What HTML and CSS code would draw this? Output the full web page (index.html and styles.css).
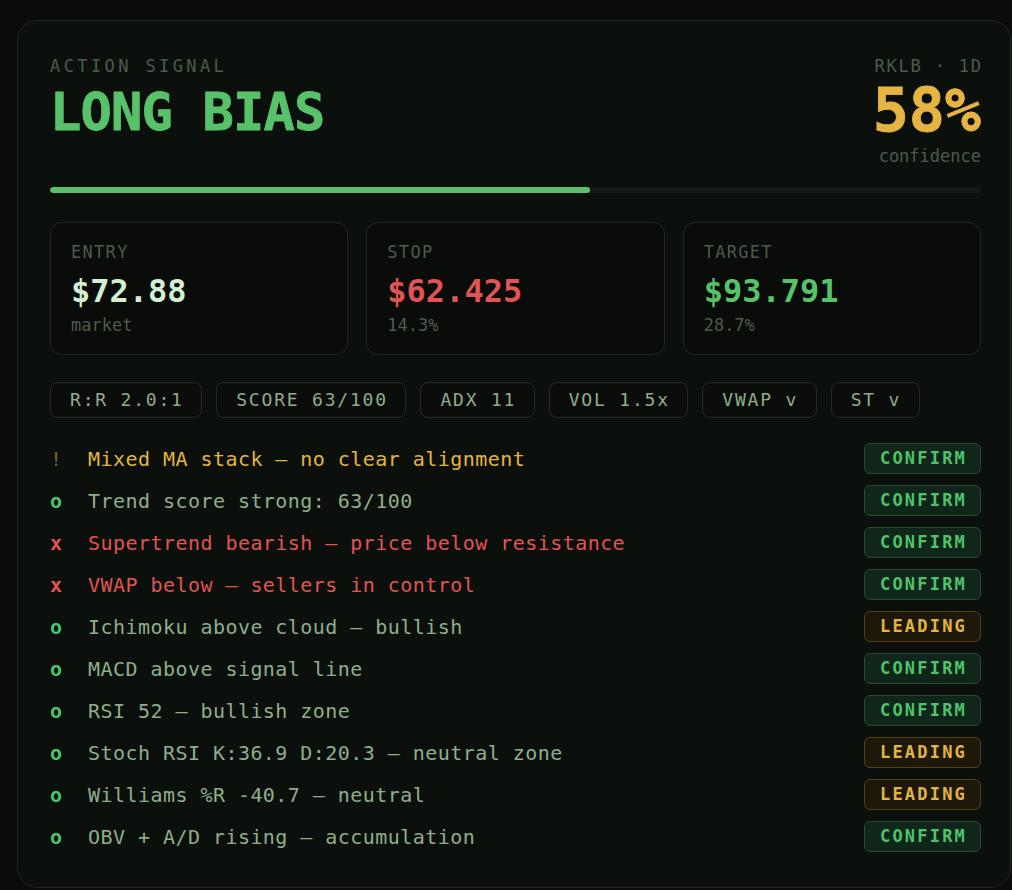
FILE: index.html
```html
<!DOCTYPE html>
<html lang="en">
<head>
<meta charset="utf-8">
<title>Action Signal</title>
<link rel="stylesheet" href="styles.css">
</head>
<body>
<div class="card">
  <header class="head">
    <div class="head-left">
      <div class="eyebrow">ACTION SIGNAL</div>
      <div class="title">LONG BIAS</div>
    </div>
    <div class="head-right">
      <div class="ticker">RKLB · 1D</div>
      <div class="conf">58%</div>
      <div class="conf-label">confidence</div>
    </div>
  </header>

  <div class="track"><div class="fill" style="width:58%"></div></div>

  <div class="levels">
    <div class="level">
      <div class="level-label">ENTRY</div>
      <div class="level-value v-entry">$72.88</div>
      <div class="level-sub">market</div>
    </div>
    <div class="level">
      <div class="level-label">STOP</div>
      <div class="level-value v-stop">$62.425</div>
      <div class="level-sub">14.3%</div>
    </div>
    <div class="level">
      <div class="level-label">TARGET</div>
      <div class="level-value v-target">$93.791</div>
      <div class="level-sub">28.7%</div>
    </div>
  </div>

  <div class="chips">
    <span class="chip">R:R 2.0:1</span>
    <span class="chip">SCORE 63/100</span>
    <span class="chip">ADX 11</span>
    <span class="chip">VOL 1.5x</span>
    <span class="chip">VWAP v</span>
    <span class="chip">ST v</span>
  </div>

  <ul class="signals">
    <li class="signal"><span class="mark m-warn">!</span><span class="text t-warn">Mixed MA stack — no clear alignment</span><span class="badge b-confirm">CONFIRM</span></li>
    <li class="signal"><span class="mark m-ok">o</span><span class="text">Trend score strong: 63/100</span><span class="badge b-confirm">CONFIRM</span></li>
    <li class="signal"><span class="mark m-bad">x</span><span class="text t-bad">Supertrend bearish — price below resistance</span><span class="badge b-confirm">CONFIRM</span></li>
    <li class="signal"><span class="mark m-bad">x</span><span class="text t-bad">VWAP below — sellers in control</span><span class="badge b-confirm">CONFIRM</span></li>
    <li class="signal"><span class="mark m-ok">o</span><span class="text">Ichimoku above cloud — bullish</span><span class="badge b-leading">LEADING</span></li>
    <li class="signal"><span class="mark m-ok">o</span><span class="text">MACD above signal line</span><span class="badge b-confirm">CONFIRM</span></li>
    <li class="signal"><span class="mark m-ok">o</span><span class="text">RSI 52 — bullish zone</span><span class="badge b-confirm">CONFIRM</span></li>
    <li class="signal"><span class="mark m-ok">o</span><span class="text">Stoch RSI K:36.9 D:20.3 — neutral zone</span><span class="badge b-leading">LEADING</span></li>
    <li class="signal"><span class="mark m-ok">o</span><span class="text">Williams %R -40.7 — neutral</span><span class="badge b-leading">LEADING</span></li>
    <li class="signal"><span class="mark m-ok">o</span><span class="text">OBV + A/D rising — accumulation</span><span class="badge b-confirm">CONFIRM</span></li>
  </ul>
</div>
</body>
</html>
```

FILE: styles.css
```css
* { box-sizing: border-box; }

html, body {
  margin: 0;
  padding: 0;
  background: #0a0c09;
  overflow: hidden;
}

body {
  font-family: "DejaVu Sans Mono", "Liberation Mono", monospace;
  color: #8fae8c;
}

.card {
  margin: 20px 0 0 17px;
  width: 994px;
  background: #0c100c;
  border: 1px solid #1f271f;
  border-radius: 20px;
  padding: 35px 29px 35px 32px;
}

/* header */
.head {
  display: flex;
  justify-content: space-between;
  align-items: flex-start;
}

.eyebrow {
  font-size: 17px;
  line-height: 20px;
  letter-spacing: 3.4px;
  color: #4a5c49;
}

.title {
  margin-top: 10px;
  font-size: 52px;
  line-height: 52px;
  font-weight: bold;
  letter-spacing: -0.8px;
  color: #58c26b;
  -webkit-text-stroke: 0.8px #58c26b;
}

.head-right {
  display: flex;
  flex-direction: column;
  align-items: flex-end;
}

.ticker {
  font-size: 17px;
  line-height: 20px;
  letter-spacing: 1.8px;
  margin-right: -1.8px;
  color: #4a5c49;
}

.conf {
  margin-top: 4px;
  font-size: 60px;
  line-height: 60px;
  font-weight: bold;
  color: #e6b443;
  -webkit-text-stroke: 0.8px #e6b443;
}

.conf-label {
  margin-top: 6px;
  font-size: 17px;
  line-height: 20px;
  color: #4a5c49;
}

/* progress */
.track {
  margin-top: 21px;
  height: 6px;
  border-radius: 3px;
  background: #151a15;
  overflow: hidden;
}

.fill {
  height: 100%;
  border-radius: 3px;
  background: #58c26b;
}

/* levels */
.levels {
  margin-top: 29px;
  display: grid;
  grid-template-columns: repeat(3, 1fr);
  gap: 18px;
}

.level {
  background: #090c09;
  border: 1px solid #1f281f;
  border-radius: 12px;
  padding: 19px 20px 19px 20px;
}

.level-label {
  font-size: 17px;
  line-height: 20px;
  letter-spacing: 1.3px;
  color: #4a5c49;
}

.level-value {
  margin-top: 11px;
  font-size: 32px;
  line-height: 36px;
  font-weight: bold;
}

.v-entry { color: #d3efd3; }
.v-stop { color: #e05454; }
.v-target { color: #58c26b; }

.level-sub {
  margin-top: 6px;
  font-size: 17px;
  line-height: 20px;
  color: #4a5c49;
}

/* chips */
.chips {
  margin-top: 27px;
  display: flex;
  gap: 14px;
}

.chip {
  display: block;
  border: 1px solid #222c22;
  border-radius: 8px;
  background: #0a0d0a;
  padding: 0 17.5px 0 19px;
  font-size: 18px;
  line-height: 34px;
  letter-spacing: 1.8px;
  color: #8fae8c;
}

/* signals */
.signals {
  list-style: none;
  margin: 25px 0 0 0;
  padding: 0;
  display: flex;
  flex-direction: column;
  gap: 11px;
}

.signal {
  display: flex;
  align-items: center;
  height: 31px;
}

.mark {
  width: 38px;
  flex: none;
  font-size: 20px;
  font-weight: bold;
}

.m-ok { color: #4fc36a; }
.m-bad { color: #e05454; }
.m-warn { color: #7a6432; font-weight: normal; }

.text {
  flex: 1;
  font-size: 20px;
  letter-spacing: 0.45px;
  color: #8fae8c;
  white-space: nowrap;
}

.t-warn { color: #e2b443; }
.t-bad { color: #e05454; }

.badge {
  flex: none;
  width: 117px;
  text-align: center;
  border-radius: 6px;
  border: 1px solid;
  font-size: 17px;
  line-height: 29px;
  font-weight: bold;
  letter-spacing: 2.2px;
  padding-left: 2px;
}

.b-confirm {
  background: #11261a;
  border-color: #274b31;
  color: #4fc36a;
}

.b-leading {
  background: #1d180a;
  border-color: #4f4219;
  color: #e2b443;
}
```
